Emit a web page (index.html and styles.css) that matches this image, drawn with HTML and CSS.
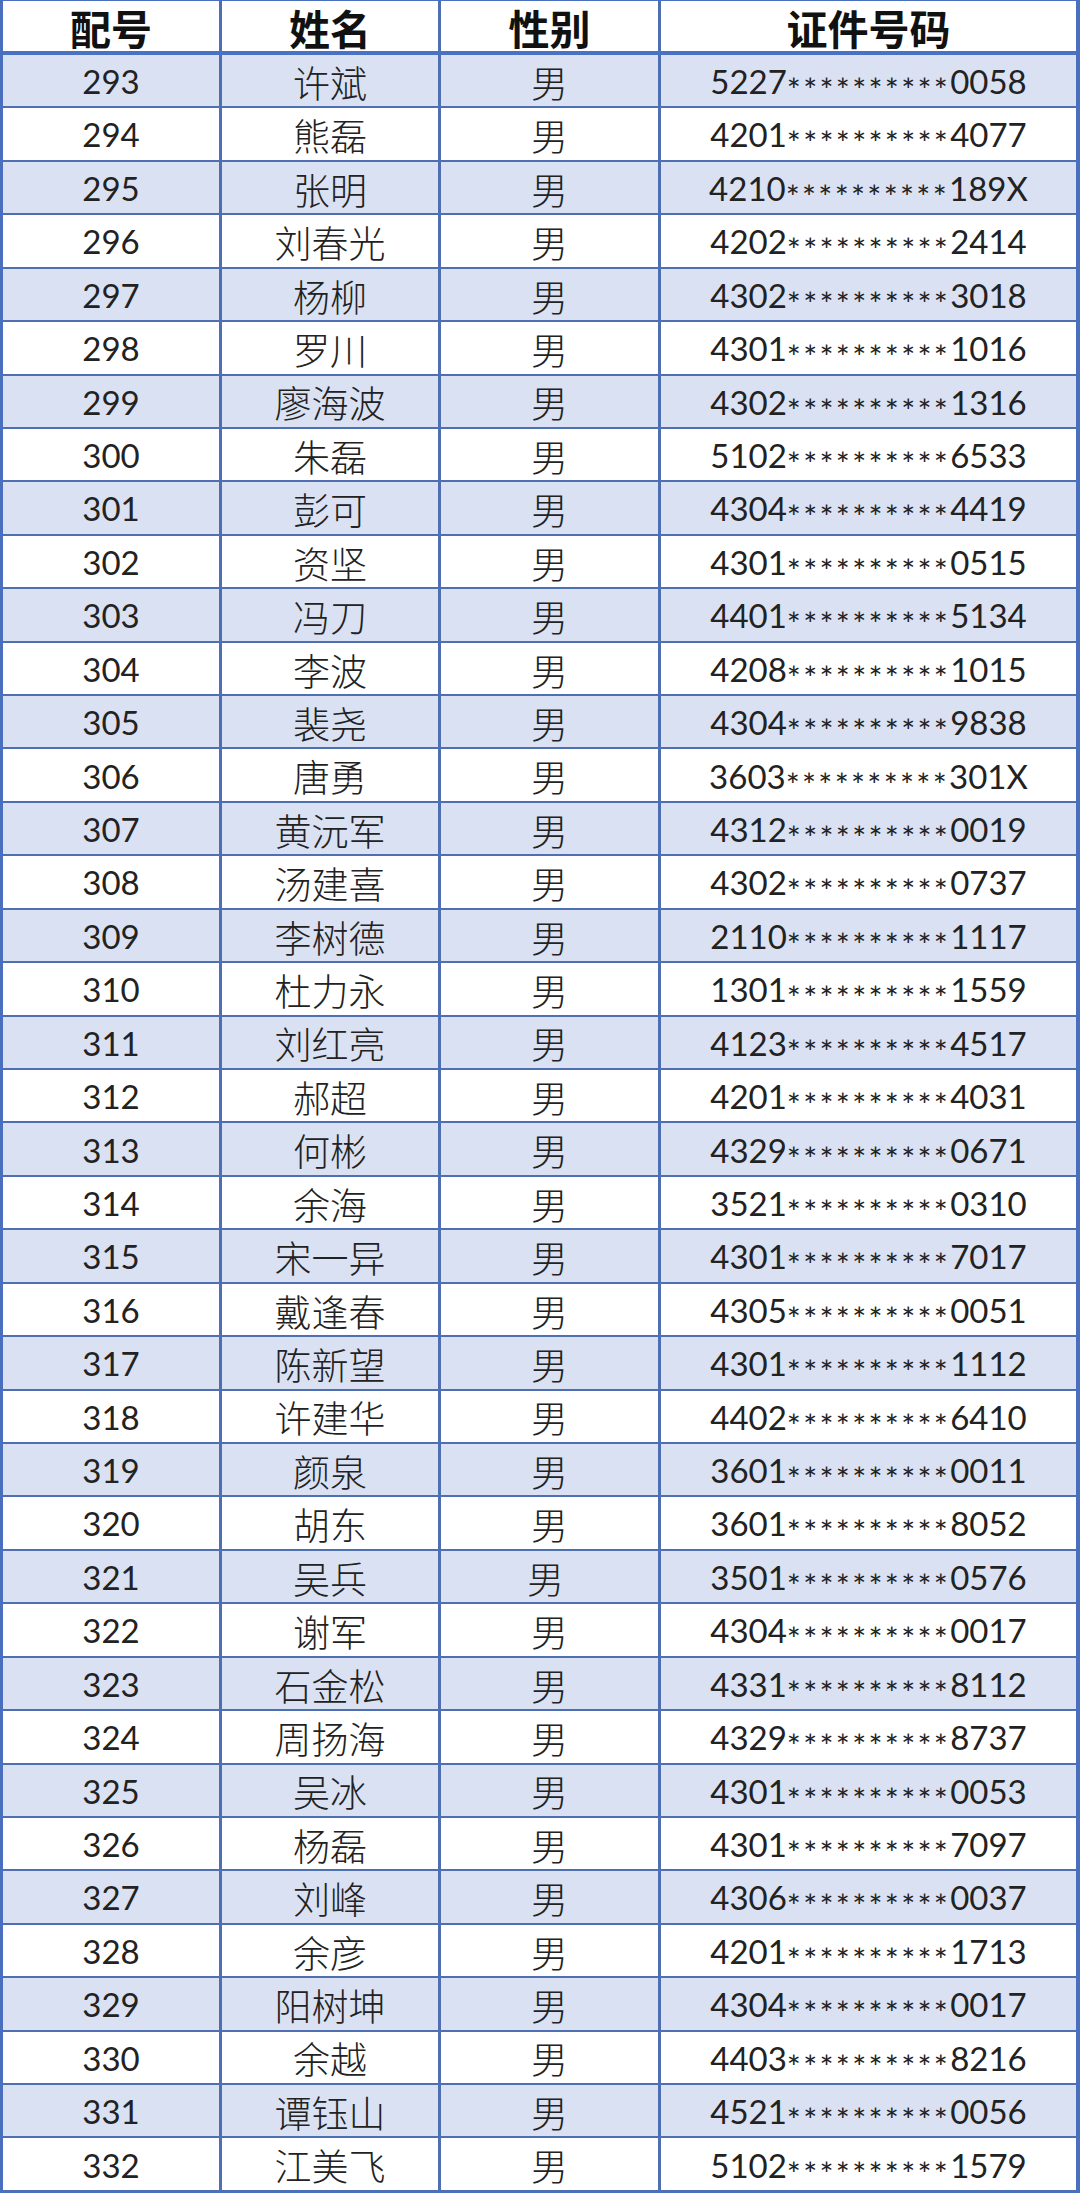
FILE: index.html
```html
<!DOCTYPE html>
<html lang="zh-CN">
<head>
<meta charset="utf-8">
<title>名单</title>
<link rel="stylesheet" href="styles.css">
</head>
<body>
<div class="sheet">
  <div class="row head">
    <div class="cell">配号</div><div class="cell">姓名</div><div class="cell">性别</div><div class="cell">证件号码</div>
  </div>
  <div class="row"><div class="cell num">293</div><div class="cell">许斌</div><div class="cell">男</div><div class="cell id">5227<span class="star">**********</span>0058</div></div>
  <div class="row"><div class="cell num">294</div><div class="cell">熊磊</div><div class="cell">男</div><div class="cell id">4201<span class="star">**********</span>4077</div></div>
  <div class="row"><div class="cell num">295</div><div class="cell">张明</div><div class="cell">男</div><div class="cell id">4210<span class="star">**********</span>189X</div></div>
  <div class="row"><div class="cell num">296</div><div class="cell">刘春光</div><div class="cell">男</div><div class="cell id">4202<span class="star">**********</span>2414</div></div>
  <div class="row"><div class="cell num">297</div><div class="cell">杨柳</div><div class="cell">男</div><div class="cell id">4302<span class="star">**********</span>3018</div></div>
  <div class="row"><div class="cell num">298</div><div class="cell">罗川</div><div class="cell">男</div><div class="cell id">4301<span class="star">**********</span>1016</div></div>
  <div class="row"><div class="cell num">299</div><div class="cell">廖海波</div><div class="cell">男</div><div class="cell id">4302<span class="star">**********</span>1316</div></div>
  <div class="row"><div class="cell num">300</div><div class="cell">朱磊</div><div class="cell">男</div><div class="cell id">5102<span class="star">**********</span>6533</div></div>
  <div class="row"><div class="cell num">301</div><div class="cell">彭可</div><div class="cell">男</div><div class="cell id">4304<span class="star">**********</span>4419</div></div>
  <div class="row"><div class="cell num">302</div><div class="cell">资坚</div><div class="cell">男</div><div class="cell id">4301<span class="star">**********</span>0515</div></div>
  <div class="row"><div class="cell num">303</div><div class="cell">冯刀</div><div class="cell">男</div><div class="cell id">4401<span class="star">**********</span>5134</div></div>
  <div class="row"><div class="cell num">304</div><div class="cell">李波</div><div class="cell">男</div><div class="cell id">4208<span class="star">**********</span>1015</div></div>
  <div class="row"><div class="cell num">305</div><div class="cell">裴尧</div><div class="cell">男</div><div class="cell id">4304<span class="star">**********</span>9838</div></div>
  <div class="row"><div class="cell num">306</div><div class="cell">唐勇</div><div class="cell">男</div><div class="cell id">3603<span class="star">**********</span>301X</div></div>
  <div class="row"><div class="cell num">307</div><div class="cell">黄沅军</div><div class="cell">男</div><div class="cell id">4312<span class="star">**********</span>0019</div></div>
  <div class="row"><div class="cell num">308</div><div class="cell">汤建喜</div><div class="cell">男</div><div class="cell id">4302<span class="star">**********</span>0737</div></div>
  <div class="row"><div class="cell num">309</div><div class="cell">李树德</div><div class="cell">男</div><div class="cell id">2110<span class="star">**********</span>1117</div></div>
  <div class="row"><div class="cell num">310</div><div class="cell">杜力永</div><div class="cell">男</div><div class="cell id">1301<span class="star">**********</span>1559</div></div>
  <div class="row"><div class="cell num">311</div><div class="cell">刘红亮</div><div class="cell">男</div><div class="cell id">4123<span class="star">**********</span>4517</div></div>
  <div class="row"><div class="cell num">312</div><div class="cell">郝超</div><div class="cell">男</div><div class="cell id">4201<span class="star">**********</span>4031</div></div>
  <div class="row"><div class="cell num">313</div><div class="cell">何彬</div><div class="cell">男</div><div class="cell id">4329<span class="star">**********</span>0671</div></div>
  <div class="row"><div class="cell num">314</div><div class="cell">余海</div><div class="cell">男</div><div class="cell id">3521<span class="star">**********</span>0310</div></div>
  <div class="row"><div class="cell num">315</div><div class="cell">宋一异</div><div class="cell">男</div><div class="cell id">4301<span class="star">**********</span>7017</div></div>
  <div class="row"><div class="cell num">316</div><div class="cell">戴逢春</div><div class="cell">男</div><div class="cell id">4305<span class="star">**********</span>0051</div></div>
  <div class="row"><div class="cell num">317</div><div class="cell">陈新望</div><div class="cell">男</div><div class="cell id">4301<span class="star">**********</span>1112</div></div>
  <div class="row"><div class="cell num">318</div><div class="cell">许建华</div><div class="cell">男</div><div class="cell id">4402<span class="star">**********</span>6410</div></div>
  <div class="row"><div class="cell num">319</div><div class="cell">颜泉</div><div class="cell">男</div><div class="cell id">3601<span class="star">**********</span>0011</div></div>
  <div class="row"><div class="cell num">320</div><div class="cell">胡东</div><div class="cell">男</div><div class="cell id">3601<span class="star">**********</span>8052</div></div>
  <div class="row"><div class="cell num">321</div><div class="cell">吴兵</div><div class="cell shift">男</div><div class="cell id">3501<span class="star">**********</span>0576</div></div>
  <div class="row"><div class="cell num">322</div><div class="cell">谢军</div><div class="cell">男</div><div class="cell id">4304<span class="star">**********</span>0017</div></div>
  <div class="row"><div class="cell num">323</div><div class="cell">石金松</div><div class="cell">男</div><div class="cell id">4331<span class="star">**********</span>8112</div></div>
  <div class="row"><div class="cell num">324</div><div class="cell">周扬海</div><div class="cell">男</div><div class="cell id">4329<span class="star">**********</span>8737</div></div>
  <div class="row"><div class="cell num">325</div><div class="cell">吴冰</div><div class="cell">男</div><div class="cell id">4301<span class="star">**********</span>0053</div></div>
  <div class="row"><div class="cell num">326</div><div class="cell">杨磊</div><div class="cell">男</div><div class="cell id">4301<span class="star">**********</span>7097</div></div>
  <div class="row"><div class="cell num">327</div><div class="cell">刘峰</div><div class="cell">男</div><div class="cell id">4306<span class="star">**********</span>0037</div></div>
  <div class="row"><div class="cell num">328</div><div class="cell">余彦</div><div class="cell">男</div><div class="cell id">4201<span class="star">**********</span>1713</div></div>
  <div class="row"><div class="cell num">329</div><div class="cell">阳树坤</div><div class="cell">男</div><div class="cell id">4304<span class="star">**********</span>0017</div></div>
  <div class="row"><div class="cell num">330</div><div class="cell">余越</div><div class="cell">男</div><div class="cell id">4403<span class="star">**********</span>8216</div></div>
  <div class="row"><div class="cell num">331</div><div class="cell">谭钰山</div><div class="cell">男</div><div class="cell id">4521<span class="star">**********</span>0056</div></div>
  <div class="row"><div class="cell num">332</div><div class="cell">江美飞</div><div class="cell">男</div><div class="cell id">5102<span class="star">**********</span>1579</div></div>
</div>
</body>
</html>
```

FILE: styles.css
```css
html, body {
  margin: 0;
  padding: 0;
  background: #ffffff;
}

.sheet {
  width: 1080px;
  height: 2193px;
  box-sizing: border-box;
  border-top: 1px solid #4a6fbf;
  border-left: 3px solid #4a6fbf;
  border-right: 4px solid #4a6fbf;
  border-bottom: 1px solid #4a6fbf;
  display: flex;
  flex-direction: column;
  font-family: "Noto Sans CJK SC", "Noto Sans", sans-serif;
  color: #222222;
}

.row {
  flex: 1 1 0;
  min-height: 0;
  display: grid;
  grid-template-columns: 219px 219px 220px 1fr;
  box-sizing: border-box;
  border-bottom: 2px solid #4f6fb3;
  font-size: 37px;
  font-weight: 300;
}

.row:nth-child(even) {
  background: #d9e1f2;
}

.row.head {
  flex: 0 0 54px;
  border-bottom: 4px solid #4a72c4;
  font-size: 41px;
  font-weight: 700;
  color: #111111;
  background: #ffffff;
}

.cell {
  border-right: 3px solid #4f6fb3;
  display: flex;
  align-items: center;
  justify-content: center;
  white-space: nowrap;
  line-height: 1.1;
  padding-top: 3px;
}

.head .cell {
  padding-top: 3px;
  line-height: 1;
}

.cell:last-child {
  border-right: 0;
}

.cell.num,
.cell.id {
  font-family: "Lato", "Noto Sans", sans-serif;
  font-size: 33px;
  font-weight: 400;
  padding-top: 1px;
}

.cell.shift {
  padding-right: 8px;
}

.star {
  display: inline-block;
  font-size: 1em;
  letter-spacing: 0.07em;
  transform: translateY(0.24em);
}
```
